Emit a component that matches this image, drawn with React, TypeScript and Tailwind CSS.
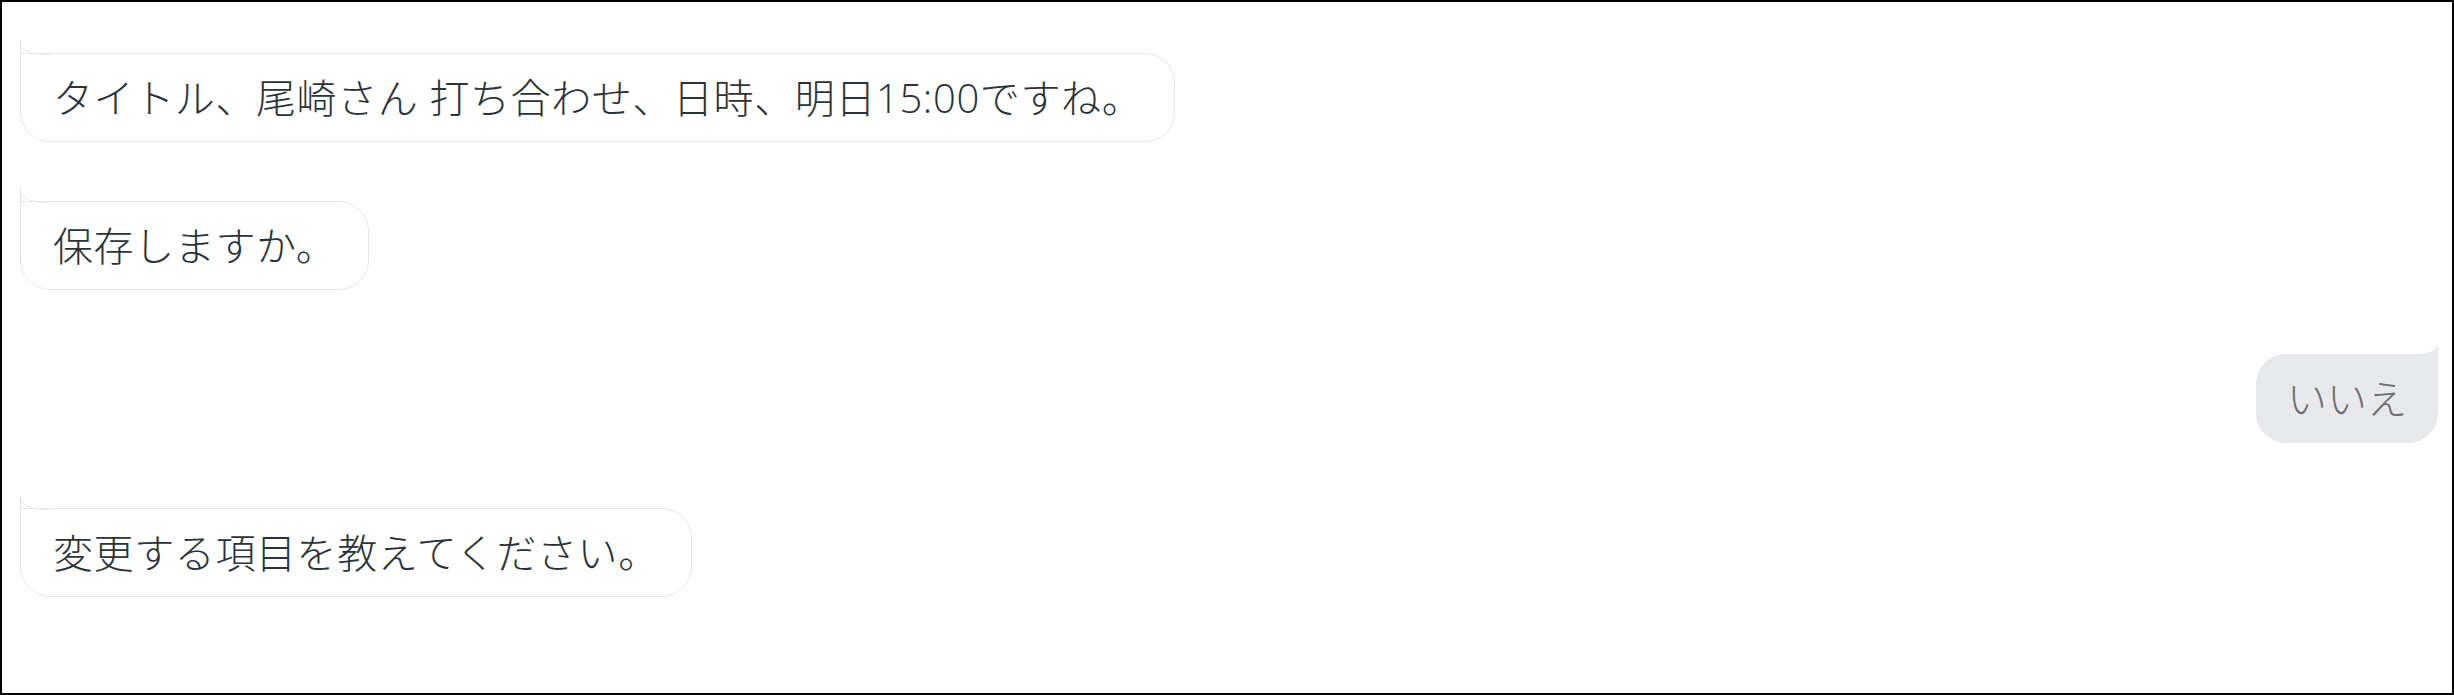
import * as React from "react";

type Message = {
  text: string;
  from: "bot" | "user";
  gap: string;
};

const messages: Message[] = [
  { text: "タイトル、尾崎さん 打ち合わせ、日時、明日15:00ですね。", from: "bot", gap: "mt-[51px]" },
  { text: "保存しますか。", from: "bot", gap: "mt-[59px]" },
  { text: "いいえ", from: "user", gap: "mt-[64px]" },
  { text: "変更する項目を教えてください。", from: "bot", gap: "mt-[65px]" },
];

/** Left-side bubble with the little flare above its top-left corner */
function BotBubble({ text }: { text: string }) {
  return (
    <div className="relative self-start ml-[18px] rounded-[30px] rounded-tl-none border border-[#e6e7eb] bg-white px-[32px] py-[16px] text-[40px] font-light leading-[55px] tracking-[0.6px] text-[#2b3339]">
      <svg
        className="absolute left-[-1px] top-[-14px]"
        width="30"
        height="15"
        viewBox="0 0 30 15"
        fill="none"
      >
        <path d="M0.5 0 V15" stroke="#e6e7eb" strokeWidth="1" />
        <path d="M0.5 2 Q0.5 14.5 30 14.5" stroke="#e6e7eb" strokeWidth="1" />
      </svg>
      {text}
    </div>
  );
}

/** Right-side grey bubble with filled flare on top-right */
function UserBubble({ text }: { text: string }) {
  return (
    <div className="relative self-end mr-[14px] rounded-[30px] rounded-tr-none bg-[#e8e9ec] px-[31px] py-[17px] text-[40px] font-light leading-[55px] text-[#6f7173]">
      <svg
        className="absolute right-0 top-[-11px]"
        width="32"
        height="12"
        viewBox="0 0 32 12"
      >
        <path d="M0 12 Q32 12 32 0 V12 Z" fill="#e8e9ec" />
      </svg>
      {text}
    </div>
  );
}

export default function App() {
  return (
    <div
      className="flex h-[695px] w-[2454px] flex-col border-2 border-black bg-white"
      style={{ fontFamily: '"Open Sans", "Noto Sans CJK JP", sans-serif' }}
    >
      {messages.map((m, i) => (
        <div key={i} className={`flex flex-col ${m.gap}`}>
          {m.from === "bot" ? <BotBubble text={m.text} /> : <UserBubble text={m.text} />}
        </div>
      ))}
    </div>
  );
}
